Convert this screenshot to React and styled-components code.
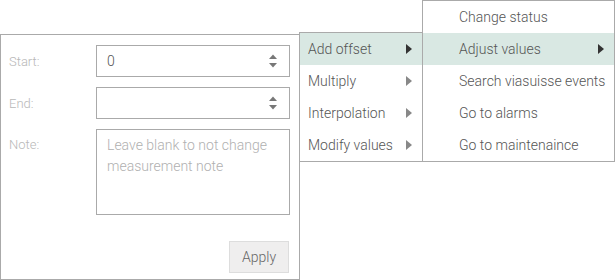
import React from 'react';
import styled, { createGlobalStyle } from 'styled-components';

const GlobalStyle = createGlobalStyle`
  html, body {
    margin: 0;
    padding: 0;
    background: #ffffff;
    font-family: Roboto, "Liberation Sans", sans-serif;
  }
  * { box-sizing: border-box; }
`;

const Page = styled.div`
  position: relative;
  width: 615px;
  height: 280px;
  overflow: hidden;
  padding-top: 34px;
`;

const Panel = styled.div`
  width: 300px;
  height: 246px;
  border: 1px solid #aaaaaa;
  padding: 10px 9px 6px 8px;
  display: flex;
  flex-direction: column;
`;

const Form = styled.div`
  display: grid;
  grid-template-columns: 87px 194px;
  row-gap: 10px;
`;

const Label = styled.div`
  font-size: 13px;
  font-weight: 300;
  color: #b8b8b8;
  display: flex;
  align-items: ${(p) => (p.$top ? 'flex-start' : 'center')};
  padding-top: ${(p) => (p.$top ? '8px' : '0')};
`;

const Field = styled.div`
  height: 32px;
  border: 1px solid #aaaaaa;
  display: flex;
  align-items: center;
  padding: 0 10px;
  font-size: 14px;
  font-weight: 300;
  color: #555555;
`;

const Value = styled.span`
  flex: 1;
`;

const Spinner = styled.svg`
  width: 10px;
  height: 16px;
  margin-right: 1px;
`;

const TextArea = styled.div`
  height: 86px;
  border: 1px solid #aaaaaa;
  padding: 5px 10px;
  font-size: 14px;
  font-weight: 300;
  line-height: 21px;
  color: #b0b0b0;
`;

const Footer = styled.div`
  margin-top: auto;
  display: flex;
  justify-content: flex-end;
`;

const Button = styled.div`
  width: 60px;
  height: 32px;
  margin-right: 1px;
  background: #efeeee;
  border: 1px solid #dddddd;
  display: flex;
  align-items: center;
  justify-content: center;
  font-size: 14px;
  font-weight: 300;
  color: #666666;
`;

const Menu = styled.div`
  position: absolute;
  top: ${(p) => p.$top}px;
  left: ${(p) => p.$left}px;
  width: ${(p) => p.$width}px;
  background: #ffffff;
  border: 1px solid #aaaaaa;
`;

const Item = styled.div`
  height: 32px;
  display: flex;
  align-items: center;
  padding-left: ${(p) => p.$indent}px;
  padding-right: ${(p) => p.$arrowGap}px;
  background: ${(p) => (p.$active ? '#d9e8e3' : 'transparent')};
  font-size: 14px;
  font-weight: 300;
  color: #555555;
`;

const ItemText = styled.span`
  flex: 1;
  white-space: nowrap;
`;

const Arrow = styled.span`
  width: 0;
  height: 0;
  border-top: 5px solid transparent;
  border-bottom: 5px solid transparent;
  border-left: 6px solid ${(p) => (p.$active ? '#333333' : '#888888')};
`;

const SpinIcon = () => (
  <Spinner viewBox="0 0 10 16">
    <path d="M1 6 L5 1.5 L9 6 Z" fill="#777777" />
    <path d="M1 10 L5 14.5 L9 10 Z" fill="#777777" />
  </Spinner>
);

const firstMenu = [
  { label: 'Add offset', active: true },
  { label: 'Multiply' },
  { label: 'Interpolation' },
  { label: 'Modify values' },
];

const secondMenu = [
  { label: 'Change status' },
  { label: 'Adjust values', active: true, arrow: true },
  { label: 'Search viasuisse events' },
  { label: 'Go to alarms' },
  { label: 'Go to maintenaince' },
];

export default function App() {
  return (
    <>
      <GlobalStyle />
      <Page>
        <Panel>
          <Form>
            <Label>Start:</Label>
            <Field>
              <Value>0</Value>
              <SpinIcon />
            </Field>
            <Label>End:</Label>
            <Field>
              <Value />
              <SpinIcon />
            </Field>
            <Label $top>Note:</Label>
            <TextArea>Leave blank to not change measurement note</TextArea>
          </Form>
          <Footer>
            <Button>Apply</Button>
          </Footer>
        </Panel>

        <Menu $top={32} $left={299} $width={124}>
          {firstMenu.map((item) => (
            <Item key={item.label} $active={item.active} $indent={8} $arrowGap={10}>
              <ItemText>{item.label}</ItemText>
              <Arrow $active={item.active} />
            </Item>
          ))}
        </Menu>

        <Menu $top={0} $left={422} $width={193}>
          {secondMenu.map((item) => (
            <Item key={item.label} $active={item.active} $indent={36} $arrowGap={10}>
              <ItemText>{item.label}</ItemText>
              {item.arrow && <Arrow $active={item.active} />}
            </Item>
          ))}
        </Menu>
      </Page>
    </>
  );
}
